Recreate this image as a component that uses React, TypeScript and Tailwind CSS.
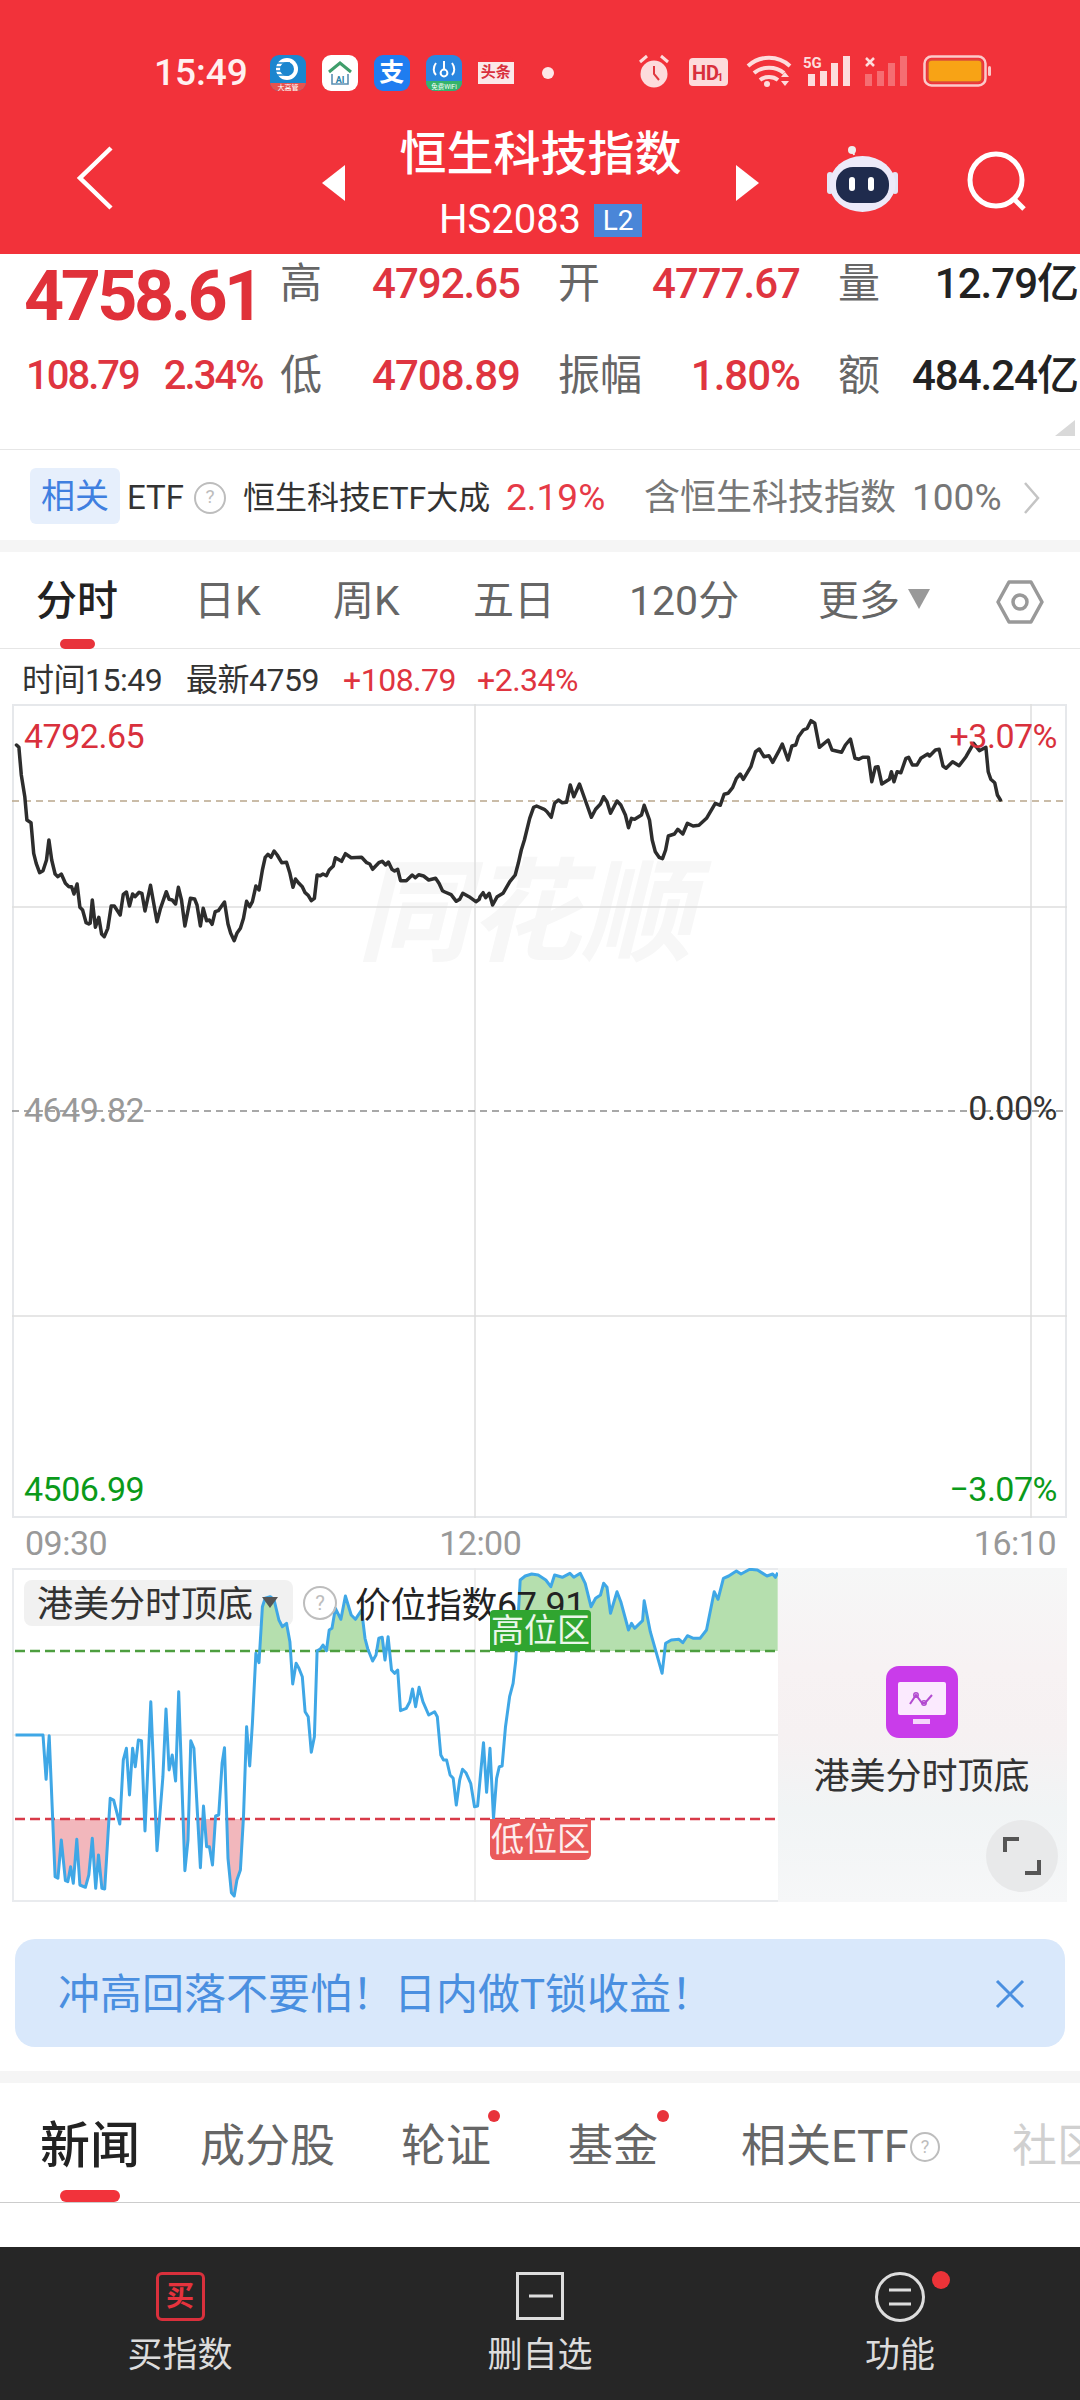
import React from "react";

type P = [number, number];
const z3 = (a: P[]) => a.map(([x, y]) => [x / 2.904, 700 + y / 3] as P);
const z4 = (a: P[]) => a.map(([x, y]) => [480 + x / 2.6133, 700 + y / 3] as P);
const z5 = (a: P[]) => a.map(([x, y]) => [x / 2.904, 1500 + y / 3] as P);
const z6 = (a: P[]) => a.map(([x, y]) => [480 + x / 2.6133, 1500 + y / 3] as P);
const str = (a: P[]) => a.map(([x, y]) => `${x.toFixed(1)},${y.toFixed(1)}`).join(" ");

const mainLine: P[] = [
  ...z3([[48,135],[55,142],[62,225],[72,290],[78,360],[90,368],[98,460],[105,490],[115,518],[125,512],[135,480],[142,420],[150,480],[160,522],[168,530],[178,522],[190,550],[200,560],[208,560],[215,582],[224,552],[232,622],[240,630],[250,668],[258,672],[262,670],[268,600],[277,682],[287,652],[295,702],[303,710],[313,685],[323,618],[332,618],[349,645],[358,583],[367,576],[376,618],[385,582],[392,590],[404,577],[412,580],[421,633],[437,556],[456,665],[466,625],[483,575],[491,598],[500,600],[510,612],[518,562],[527,600],[537,678],[553,595],[565,597],[572,615],[582,678],[590,625],[600,662],[608,660],[616,673],[625,635],[634,632],[652,606],[662,672],[670,700],[680,722],[688,700],[698,685],[707,655],[716,604],[725,620],[733,605],[743,558],[752,570],[762,510],[770,472],[778,463],[787,472],[796,453],[805,465],[818,488],[832,487],[842,520],[851,562],[858,537],[868,550],[878,560],[886,578],[895,586],[904,602],[913,595],[921,525],[930,527],[938,522],[948,527],[956,510],[968,498],[974,473],[992,484],[1003,461],[1020,473],[1050,472],[1065,488],[1074,492],[1082,508],[1100,488],[1110,484],[1120,495],[1128,486],[1138,508],[1146,513],[1155,508],[1163,542],[1180,542],[1197,525],[1206,533],[1216,524],[1230,528],[1245,540],[1265,535],[1275,550],[1285,572],[1292,576],[1310,584],[1325,604],[1335,598],[1344,580],[1362,590],[1382,605],[1392,598]]),
  ...z4([[0,590],[8,578],[15,593],[24,580],[33,615],[45,590],[60,580],[78,545],[92,525],[100,490],[108,450],[116,420],[130,355],[140,322],[148,318],[168,328],[175,335],[186,352],[195,310],[205,300],[215,308],[226,307],[236,255],[245,290],[260,252],[275,300],[291,352],[302,328],[315,312],[323,290],[332,305],[341,340],[358,303],[368,315],[380,345],[388,383],[396,355],[404,358],[422,345],[429,316],[443,360],[450,420],[458,455],[468,472],[477,476],[485,450],[492,408],[508,402],[517,388],[530,402],[542,370],[557,378],[572,376],[592,355],[615,310],[628,316],[638,283],[648,280],[660,263],[670,235],[680,222],[688,238],[708,200],[720,155],[730,147],[742,170],[755,167],[765,187],[780,155],[790,132],[805,180],[815,138],[825,135],[832,110],[845,90],[855,85],[865,62],[875,70],[887,142],[910,120],[920,150],[945,157],[955,135],[968,117],[980,175],[990,178],[1000,172],[1015,172],[1024,245],[1033,202],[1040,200],[1050,252],[1070,238],[1075,215],[1082,245],[1090,215],[1100,218],[1113,175],[1120,172],[1130,195],[1142,195],[1152,175],[1170,162],[1175,168],[1190,150],[1200,148],[1210,198],[1218,205],[1235,185],[1252,197],[1270,170],[1290,130],[1305,152],[1322,142],[1328,215],[1335,238],[1345,248],[1352,285],[1360,300]]),
];

const lowLine: P[] = [
  ...z5([[45,705],[125,705],[134,838],[143,707],[160,1130],[168,1135],[178,1020],[190,1142],[197,1145],[205,1100],[213,1150],[223,1018],[232,1155],[248,1162],[258,1125],[268,1015],[278,1165],[286,1065],[296,1165],[304,1167],[320,895],[330,900],[348,972],[358,780],[367,745],[376,885],[385,745],[393,800],[402,720],[411,722],[421,993],[438,605],[456,1052],[473,830],[482,627],[491,810],[500,765],[510,843],[519,575],[537,1112],[546,1020],[554,722],[563,745],[582,1103],[591,918],[600,1040],[608,1040],[617,1095],[626,948],[635,945],[645,790],[652,743],[662,1075],[672,1178],[680,1188],[688,1140],[698,1110],[707,950],[716,680],[725,798],[733,670],[743,460],[752,488],[762,320],[770,295],[785,290],[796,300],[810,360],[820,380],[832,370],[842,425],[850,552],[860,490],[868,505],[878,530],[886,635],[895,650],[904,757],[913,710],[921,452],[930,447],[938,435],[948,452],[956,390],[964,385],[974,325],[990,358],[1003,288],[1020,345],[1032,358],[1050,330],[1060,415],[1068,447],[1082,483],[1092,465],[1100,415],[1110,412],[1118,480],[1127,410],[1137,510],[1146,520],[1155,510],[1163,632],[1180,625],[1190,605],[1198,567],[1207,620],[1217,562],[1228,605],[1245,645],[1262,635],[1270,650],[1280,765],[1288,780],[1297,780],[1307,825],[1316,835],[1325,915],[1335,840],[1343,808],[1353,818],[1367,850],[1378,920],[1387,918],[1404,728],[1413,877],[1423,745],[1433,955],[1442,835],[1450,800],[1458,798],[1468,680],[1480,590],[1490,550],[1498,480]]),
  ...z6([[105,240],[118,228],[135,222],[152,225],[172,240],[185,260],[195,225],[215,232],[235,220],[245,232],[262,220],[275,250],[290,320],[302,295],[315,285],[323,250],[332,262],[341,340],[358,275],[368,305],[388,390],[396,370],[404,385],[425,362],[429,302],[445,395],[460,455],[476,520],[485,430],[500,420],[520,418],[530,428],[542,407],[558,415],[575,415],[592,390],[612,275],[622,298],[636,235],[650,228],[670,213],[682,222],[705,208],[725,210],[750,228],[765,222],[772,232],[778,218]]),
];

const fillTo = (a: P[], y: number) => str([...a, [a[a.length - 1][0], y], [a[0][0], y]]);

function Help({ size, cls }: { size: number; cls: string }) {
  return (
    <span
      className={`inline-flex items-center justify-center rounded-full border-2 border-[#bdbdbd] text-[#bdbdbd] shrink-0 ${cls}`}
      style={{ width: size, height: size, fontSize: size * 0.6 }}
    >
      ?
    </span>
  );
}

function AppIcons() {
  return (
    <div className="flex items-center ml-[22px] gap-[16px]">
      <div className="w-[36px] h-[36px] rounded-[9px] bg-[#1b86cf] overflow-hidden">
        <svg viewBox="0 0 36 36" className="w-full h-full">
          <circle cx="17" cy="14" r="11" fill="#fff" />
          <circle cx="17" cy="14" r="7" fill="#1b86cf" />
          <path d="M6 8h14M5 12h12M5 16h12M7 20h12" stroke="#1b86cf" strokeWidth="1.6" />
          <rect x="0" y="28" width="36" height="8" fill="#e8534f" />
          <text x="18" y="35" fontSize="7" fill="#fff" textAnchor="middle">大高管</text>
        </svg>
      </div>
      <div className="w-[36px] h-[36px] rounded-[9px] bg-white overflow-hidden">
        <svg viewBox="0 0 36 36" className="w-full h-full">
          <path d="M7 17 18 8l11 9" fill="none" stroke="#3f9e6b" strokeWidth="3" />
          <path d="M10 19v10h16V19" fill="none" stroke="#5a8fb3" strokeWidth="1.6" />
          <text x="18" y="28" fontSize="9" fontWeight="700" fill="#2f7fa8" textAnchor="middle">AI</text>
        </svg>
      </div>
      <div className="w-[36px] h-[36px] rounded-[9px] bg-[#1f7df0] flex items-center justify-center text-white text-[25px] font-bold leading-none">支</div>
      <div className="w-[36px] h-[36px] rounded-[9px] bg-[#2a86e0] overflow-hidden">
        <svg viewBox="0 0 36 36" className="w-full h-full">
          <rect y="26" width="36" height="10" fill="#35b36b" />
          <circle cx="18" cy="18" r="3.4" fill="none" stroke="#fff" strokeWidth="2" />
          <path d="M18 6v9M10 8c-3 4-3 9 0 12M26 8c3 4 3 9 0 12" fill="none" stroke="#fff" strokeWidth="2" />
          <text x="18" y="34" fontSize="6.5" fill="#fff" textAnchor="middle">免费WiFi</text>
        </svg>
      </div>
      <div className="w-[36px] h-[36px] rounded-[9px] bg-[#f2323a] flex flex-col justify-center">
        <div className="bg-[#fbe9e9] h-[22px] flex items-center justify-center text-[#d9303c] text-[15px] font-bold leading-none">头条</div>
      </div>
      <div className="w-[12px] h-[12px] rounded-full bg-[#fde8e8] ml-[12px]" />
    </div>
  );
}

function StatusRight() {
  return (
    <svg viewBox="625 45 375 55" className="w-[375px] h-[55px] ml-auto mr-[80px]">
      <circle cx="654" cy="74" r="13.5" fill="#fddcdc" />
      <path d="M654 66v8l5 6" fill="none" stroke="#e0383f" strokeWidth="2" />
      <path d="M640 62l7-6M668 62l-7-6" stroke="#fddcdc" strokeWidth="3" />
      <rect x="689" y="58" width="39" height="28" rx="4" fill="#fddcdc" />
      <text x="692" y="80" fontSize="20" fontWeight="700" fill="#d9303c" fontFamily="Roboto">HD</text>
      <text x="717" y="81" fontSize="11" fontWeight="700" fill="#d9303c" fontFamily="Roboto">1</text>
      <path d="M748 66c12-11 30-11 42 0" fill="none" stroke="#fddcdc" strokeWidth="4" />
      <path d="M754 73c8-7 22-7 30 0" fill="none" stroke="#fddcdc" strokeWidth="4" />
      <path d="M760 80c5-4 13-4 18 0" fill="none" stroke="#fddcdc" strokeWidth="4" />
      <circle cx="767" cy="84" r="3" fill="#fddcdc" />
      <path d="M781 77l4-5 4 5zM781 81l4 5 4-5z" fill="#fddcdc" />
      <text x="803" y="68" fontSize="15" fontWeight="700" fill="#fddcdc" fontFamily="Roboto">5G</text>
      <rect x="808" y="74" width="7" height="12" fill="#fddcdc" />
      <rect x="820" y="71" width="7" height="15" fill="#fddcdc" />
      <rect x="831" y="63" width="7" height="23" fill="#fddcdc" />
      <rect x="843" y="56" width="7" height="30" fill="#fddcdc" />
      <path d="M866 58l8 8M874 58l-8 8" stroke="#fddcdc" strokeWidth="2.5" />
      <g fill="#fddcdc" opacity="0.35">
        <rect x="865" y="74" width="7" height="12" />
        <rect x="877" y="71" width="7" height="15" />
        <rect x="888" y="63" width="7" height="23" />
        <rect x="900" y="56" width="7" height="30" />
      </g>
      <rect x="924.5" y="56.5" width="61" height="29" rx="7" fill="none" stroke="#fbcaca" strokeWidth="2.5" />
      <rect x="928" y="60" width="54" height="22" rx="4" fill="#f8a315" stroke="#d9503a" strokeWidth="1.5" />
      <rect x="988" y="66" width="3" height="10" rx="1.5" fill="#fbcaca" />
    </svg>
  );
}

function NavBar() {
  return (
    <div className="flex items-start h-[115px] mt-[24px]">
      <svg viewBox="0 0 40 66" className="w-[40px] h-[66px] ml-[75px] mt-[21px] shrink-0">
        <path d="M36 3 5 33l31 30" fill="none" stroke="#fff" strokeWidth="4.5" />
      </svg>
      <div className="w-0 h-0 ml-[207px] mt-[41px] border-y-[18px] border-y-transparent border-r-[23px] border-r-white shrink-0" />
      <div className="w-[391px] flex flex-col items-center shrink-0">
        <div className="text-[47px] leading-[60px] font-medium text-white whitespace-nowrap">恒生科技指数</div>
        <div className="flex items-center h-[40px] mt-[16px]">
          <span className="text-[40px] leading-[40px] text-white">HS2083</span>
          <span className="ml-[13px] w-[48px] h-[33px] bg-[#4a86d8] text-white text-[28px] leading-[33px] text-center">L2</span>
        </div>
      </div>
      <div className="w-0 h-0 mt-[41px] border-y-[18px] border-y-transparent border-l-[23px] border-l-white shrink-0" />
      <svg viewBox="825 145 75 70" className="w-[75px] h-[70px] ml-[67px] mt-[21px] shrink-0">
        <path d="M853 155c-1-4 0-6-3-6" fill="none" stroke="#eee" strokeWidth="2" />
        <circle cx="851" cy="150" r="4" fill="#eee" />
        <rect x="826" y="172" width="6" height="22" rx="3" fill="#e4e6f5" />
        <rect x="891" y="172" width="6" height="22" rx="3" fill="#e4e6f5" />
        <ellipse cx="861.500" cy="184" rx="33" ry="28" fill="#eceaf9" />
        <rect x="835" y="167" width="53" height="36" rx="17" fill="#1f2b4d" />
        <rect x="848" y="177" width="6" height="14" rx="3" fill="#fff" />
        <rect x="867" y="177" width="6" height="14" rx="3" fill="#fff" />
      </svg>
      <svg viewBox="960 145 75 75" className="w-[75px] h-[75px] ml-[60px] mt-[21px] shrink-0">
        <circle cx="995" cy="180" r="26" fill="none" stroke="#fff" strokeWidth="5" />
        <path d="M1013 199l10 10" stroke="#fff" strokeWidth="5" />
      </svg>
    </div>
  );
}

const valueCls = "text-[42px] leading-[60px] tracking-[-1px] font-medium text-right whitespace-nowrap";
const labelCls = "text-[#666] text-[42px] leading-[60px] whitespace-nowrap ml-[-2px]";

function Quote() {
  return (
    <div className="relative h-[196px] border-b border-b-[#e6e6e6]">
      <div className="grid grid-cols-[282px_50px_188px_40px_90px_150px_40px_50px_188px] grid-rows-[60px_60px] gap-y-[32px] w-[1078px]">
        <div className="text-[#e0313a] text-[70px] leading-[60px] tracking-[-3.5px] font-bold pl-[24px] mt-[12px]">4758.61</div>
        <div className={labelCls}>高</div>
        <div className={`${valueCls} text-[#df3540]`}>4792.65</div>
        <div />
        <div className={labelCls}>开</div>
        <div className={`${valueCls} text-[#df3540]`}>4777.67</div>
        <div />
        <div className={labelCls}>量</div>
        <div className={`${valueCls} text-[#222]`}>12.79亿</div>

        <div className="flex items-center text-[#df3540] text-[40px] leading-[60px] tracking-[-2px] font-medium pl-[26px] gap-[25px] mt-[-1px]">
          <span>108.79</span>
          <span>2.34%</span>
        </div>
        <div className={labelCls}>低</div>
        <div className={`${valueCls} text-[#df3540]`}>4708.89</div>
        <div />
        <div className={labelCls}>振幅</div>
        <div className={`${valueCls} text-[#df3540]`}>1.80%</div>
        <div />
        <div className={labelCls}>额</div>
        <div className={`${valueCls} text-[#222]`}>484.24亿</div>
      </div>
      <svg viewBox="0 0 20 16" className="absolute right-[5px] top-[166px] w-[20px] h-[16px]">
        <path d="M0 16 20 0v16z" fill="#d9d9d9" />
      </svg>
    </div>
  );
}

function EtfRow() {
  return (
    <div className="h-[90px] flex items-center whitespace-nowrap pt-[5px]">
      <div className="ml-[30px] mt-[-4px] w-[90px] h-[56px] rounded-[6px] bg-[#e6effc] text-[#3f7fe0] text-[34px] leading-[56px] text-center">相关</div>
      <span className="ml-[7px] text-[#333] text-[33px]">ETF</span>
      <Help size={32} cls="ml-[10px]" />
      <span className="ml-[17px] text-[#333] text-[32px] w-[263px]">恒生科技ETF大成</span>
      <span className="text-[#e63a47] text-[37px] w-[138px]">2.19%</span>
      <span className="text-[#777] text-[36px] w-[268px]">含恒生科技指数</span>
      <span className="text-[#777] text-[37px] w-[111px]">100%</span>
      <svg viewBox="0 0 18 34" className="w-[18px] h-[34px]">
        <path d="M2 2l13 15L2 32" fill="none" stroke="#c4c4c4" strokeWidth="2.5" />
      </svg>
    </div>
  );
}

function Band() {
  return <div className="h-[12px] bg-[#f5f5f5]" />;
}

function PeriodTabs() {
  return (
    <div className="relative h-[97px] border-b border-b-[#e6e6e6] flex items-center text-[41px] text-[#666] whitespace-nowrap pt-[4px]">
      <span className="ml-[36px] w-[158px] text-[#222] font-medium">分时</span>
      <span className="w-[139px]">日K</span>
      <span className="w-[140px]">周K</span>
      <span className="w-[156px]">五日</span>
      <span className="w-[189px]">120分</span>
      <span className="w-[90px]">更多</span>
      <div className="w-0 h-0 mt-[-6px] border-x-[11px] border-x-transparent border-t-[20px] border-t-[#999]" />
      <svg viewBox="0 0 48 46" className="w-[48px] h-[46px] ml-[66px] shrink-0">
        <path d="M13 3h22l11 20-11 20H13L2 23z" fill="none" stroke="#999" strokeWidth="3.5" strokeLinejoin="round" />
        <circle cx="24" cy="23" r="7" fill="none" stroke="#999" strokeWidth="3.5" />
      </svg>
      <div className="absolute left-[60px] bottom-[-1px] w-[35px] h-[10px] rounded-full bg-[#e8333b]" />
    </div>
  );
}

function InfoRow() {
  return (
    <div className="h-[55px] flex items-center text-[32px] tracking-[-0.5px] whitespace-nowrap pt-[6px]">
      <span className="ml-[22px] w-[164px] text-[#333]">时间15:49</span>
      <span className="w-[157px] text-[#333]">最新4759</span>
      <span className="w-[134px] text-[#df3540]">+108.79</span>
      <span className="text-[#df3540]">+2.34%</span>
    </div>
  );
}

function MainChart() {
  const label = "absolute text-[34px] leading-[34px] tracking-[-0.5px] whitespace-nowrap";
  return (
    <div className="relative h-[814px] w-[1055px] ml-[12px]">
      <div className="absolute left-[345px] top-[145px] text-[#f7f7f7] text-[112px] leading-[130px] font-bold italic whitespace-nowrap">同花顺</div>
      <svg viewBox="12 704 1055 814" className="absolute inset-0 w-full h-full">
        <rect x="13" y="705" width="1053" height="812" stroke="#e6e8eb" strokeWidth="2" fill="none" />
        <path d="M12 907H1067M12 1316H1067M475 704V1518M1031 704V1518" stroke="#dedede" strokeWidth="1.5" />
        <path d="M12 801H1067" stroke="#b9a68c" strokeWidth="1.5" strokeDasharray="7 5" />
        <path d="M12 1111H1067" stroke="#8c8c8c" strokeWidth="1.5" strokeDasharray="7 5" />
        <polyline points={str(mainLine)} fill="none" stroke="#2d2d2d" strokeWidth="3.5" strokeLinejoin="round" strokeLinecap="round" />
      </svg>
      <span className={`${label} left-[12px] top-[15px] text-[#d9303c]`}>4792.65</span>
      <span className={`${label} right-[10px] top-[15px] text-[#d9303c]`}>+3.07%</span>
      <span className={`${label} left-[12px] top-[389px] text-[#999]`}>4649.82</span>
      <span className={`${label} right-[10px] top-[387px] text-[#333]`}>0.00%</span>
      <span className={`${label} left-[12px] top-[768px] text-[#0a9a1a]`}>4506.99</span>
      <span className={`${label} right-[10px] top-[768px] text-[#0a9a1a]`}>−3.07%</span>
    </div>
  );
}

function TimeAxis() {
  return (
    <div className="h-[50px] flex items-center text-[34px] tracking-[-0.5px] text-[#999] whitespace-nowrap">
      <span className="ml-[25px]">09:30</span>
      <span className="ml-[332px]">12:00</span>
      <span className="ml-auto mr-[24px]">16:10</span>
    </div>
  );
}

function LowerChart() {
  return (
    <div className="relative h-[334px] w-[1055px] ml-[12px] overflow-hidden">
      <div className="absolute left-[12px] top-[12px] w-[269px] h-[46px] rounded-[8px] bg-[#f1f1f1]" />
      <svg viewBox="12 1568 1055 334" className="absolute inset-0 w-full h-full">
        <defs>
          <clipPath id="upper"><rect x="12" y="1568" width="766" height="83" /></clipPath>
          <clipPath id="lower"><rect x="12" y="1819" width="766" height="83" /></clipPath>
        </defs>
        <rect x="13" y="1569" width="1053" height="332" fill="none" stroke="#e9ebee" strokeWidth="2" />
        <path d="M12 1735H778M475 1568V1902" stroke="#e8e8e8" strokeWidth="1.5" />
        <polygon points={fillTo(lowLine, 1651)} fill="#b5dfae" clipPath="url(#upper)" />
        <polygon points={fillTo(lowLine, 1819)} fill="#f2b7bc" clipPath="url(#lower)" />
        <path d="M15 1651H778" stroke="#4d9e3f" strokeWidth="2.5" strokeDasharray="10 5" />
        <path d="M15 1819H778" stroke="#d83a48" strokeWidth="2.5" strokeDasharray="10 5" />
        <polyline points={str(lowLine)} fill="none" stroke="#3fa7e6" strokeWidth="3" strokeLinejoin="round" />
      </svg>
      <span className="absolute left-[25px] top-[14px] h-[46px] text-[36px] leading-[46px] text-[#333] whitespace-nowrap">港美分时顶底</span>
      <div className="absolute left-[250px] top-[29px] w-0 h-0 border-x-[8px] border-x-transparent border-t-[11px] border-t-[#555]" />
      <Help size={34} cls="absolute left-[291px] top-[18px]" />
      <span className="absolute left-[343px] top-[21px] text-[36px] leading-[34px] tracking-[-0.5px] text-[#222] whitespace-nowrap">价位指数67.91</span>
      <div className="absolute left-[478px] top-[42px] w-[101px] h-[41px] bg-[#30a530] rounded-t-[4px] text-[#eaf7ea] text-[33px] leading-[41px] text-center">高位区</div>
      <div className="absolute left-[478px] top-[251px] w-[101px] h-[41px] bg-[#ea5a5a] rounded-b-[6px] text-[#fdeeee] text-[33px] leading-[41px] text-center">低位区</div>
      <div className="absolute left-[766px] top-0 w-[289px] h-[334px] bg-[linear-gradient(180deg,#f6f7f7_0%,#f7f2f3_30%,#f6f1f2_50%,#f1f4f5_72%,#f6f7f8_100%)] flex flex-col items-center pt-[98px] pr-[2px]">
        <svg viewBox="0 0 72 72" className="w-[72px] h-[72px] shrink-0">
          <rect width="72" height="72" rx="13" fill="#c93cea" />
          <rect x="12" y="16" width="48" height="33" rx="2" fill="#fbeafe" />
          <rect x="27" y="53" width="17" height="5" fill="#f5d5fb" />
          <path d="M24 38l6-9 6 8 3 0 7-8" fill="none" stroke="#b24ad0" strokeWidth="2" />
          <circle cx="30" cy="29" r="2.2" fill="none" stroke="#b24ad0" strokeWidth="1.5" />
          <circle cx="38" cy="37" r="2.2" fill="none" stroke="#b24ad0" strokeWidth="1.5" />
        </svg>
        <span className="mt-[17px] text-[36px] leading-[44px] text-[#333] whitespace-nowrap">港美分时顶底</span>
      </div>
      <div className="absolute left-[974px] top-[252px] w-[72px] h-[72px] rounded-full bg-[#e8e9ea] flex items-center justify-center">
        <svg viewBox="0 0 40 40" className="w-[40px] h-[40px]">
          <path d="M3 16V3h14M37 24v13H23" fill="none" stroke="#555" strokeWidth="4" />
        </svg>
      </div>
    </div>
  );
}

function Banner() {
  return (
    <div className="mx-[15px] mt-[37px] h-[108px] rounded-[20px] bg-[#d9e8fb] flex items-center pl-[43px] pr-[40px] pt-[2px]">
      <span className="text-[42px] text-[#4a8fe0] whitespace-nowrap">冲高回落不要怕！日内做T锁收益！</span>
      <svg viewBox="0 0 30 30" className="w-[30px] h-[30px] ml-auto">
        <path d="M2 2l26 26M28 2 2 28" stroke="#4a8fe0" strokeWidth="3" />
      </svg>
    </div>
  );
}

function NewsTabs() {
  return (
    <div className="relative h-[120px] border-b border-b-[#ccc] flex items-center text-[45px] text-[#666] whitespace-nowrap pt-[8px] overflow-hidden">
      <span className="ml-[40px] w-[160px] shrink-0 text-[50px] text-[#222] font-medium">新闻</span>
      <span className="w-[201px] shrink-0">成分股</span>
      <span className="relative w-[167px] shrink-0">
        轮证
        <i className="absolute left-[87px] top-[-3px] w-[12px] h-[12px] rounded-full bg-[#e8333b]" />
      </span>
      <span className="relative w-[173px] shrink-0">
        基金
        <i className="absolute left-[89px] top-[-3px] w-[12px] h-[12px] rounded-full bg-[#e8333b]" />
      </span>
      <span className="w-[169px] shrink-0">相关ETF</span>
      <Help size={30} cls="" />
      <span className="ml-[72px] shrink-0 text-[#d0d0d0]">社区</span>
      <div className="absolute left-[60px] bottom-0 w-[60px] h-[12px] rounded-full bg-[#f2333b]" />
    </div>
  );
}

function BottomBar() {
  const item = "flex flex-col items-center w-[360px] relative";
  const lab = "text-[35px] leading-[40px] text-[#dcdcdc] whitespace-nowrap";
  return (
    <div className="h-[153px] bg-[#262626] flex pt-[25px]">
      <div className={item}>
        <div className="w-[49px] h-[49px] rounded-[6px] border-[3px] border-[#d9303c] flex items-center justify-center text-[#e6333d] text-[28px] font-bold leading-none">买</div>
        <span className={`${lab} mt-[15px]`}>买指数</span>
      </div>
      <div className={item}>
        <svg viewBox="0 0 48 48" className="w-[48px] h-[48px]">
          <rect x="1.500" y="1.500" width="45" height="45" fill="none" stroke="#ddd" strokeWidth="3" />
          <path d="M13 24h24" stroke="#ddd" strokeWidth="3" />
        </svg>
        <span className={`${lab} mt-[16px]`}>删自选</span>
      </div>
      <div className={item}>
        <svg viewBox="0 0 50 50" className="w-[50px] h-[50px]">
          <circle cx="25" cy="25" r="23.500" fill="none" stroke="#ddd" strokeWidth="3" />
          <path d="M14 18h22M14 32h22" stroke="#ddd" strokeWidth="3" />
        </svg>
        <span className={`${lab} mt-[14px]`}>功能</span>
        <i className="absolute left-[212px] top-[-1px] w-[18px] h-[18px] rounded-full bg-[#ec3338]" />
      </div>
    </div>
  );
}

export default function App() {
  return (
    <div className="w-[1080px] h-[2400px] bg-white flex flex-col overflow-hidden font-['Roboto','Noto_Sans_CJK_SC',sans-serif]">
      <header className="h-[254px] bg-[#f2323a] shrink-0">
        <div className="flex items-center pt-[45px] h-[100px]">
          <span className="ml-[154px] text-[37px] leading-[55px] font-medium text-[#fff0f0]">15:49</span>
          <AppIcons />
          <StatusRight />
        </div>
        <NavBar />
      </header>
      <Quote />
      <EtfRow />
      <Band />
      <PeriodTabs />
      <InfoRow />
      <MainChart />
      <TimeAxis />
      <LowerChart />
      <Banner />
      <div className="mt-[24px]"><Band /></div>
      <NewsTabs />
      <div className="flex-1" />
      <BottomBar />
    </div>
  );
}
